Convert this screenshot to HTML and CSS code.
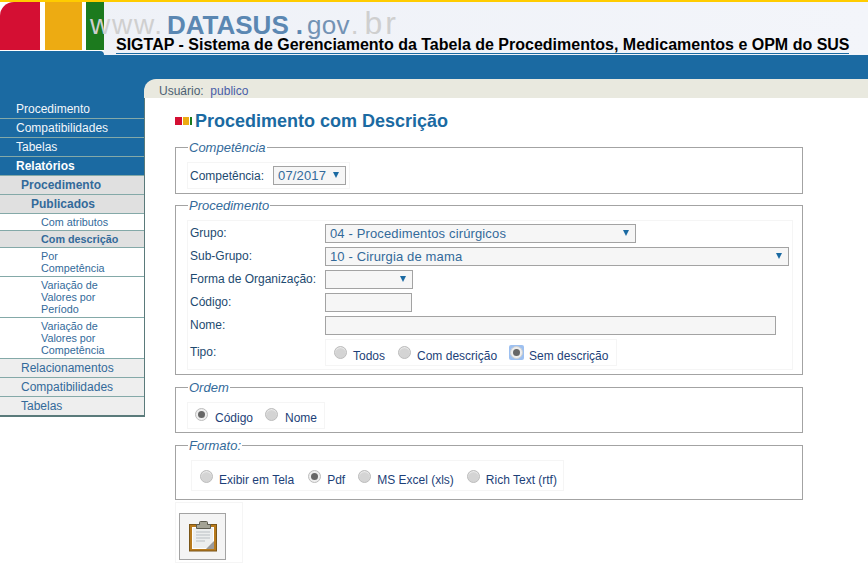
FILE: index.html
```html
<!DOCTYPE html>
<html lang="pt-BR">
<head>
<meta charset="utf-8">
<title>SIGTAP</title>
<link rel="stylesheet" href="styles.css">
</head>
<body>
<header class="top">
  <div class="logo">
    <div class="squares"><span class="sq red"></span><span class="sq amber"></span><span class="sq green"></span></div>
    <div class="foot"></div>
  </div>
  <div class="brand">
    <div class="site"><span class="www">www.</span><span class="blue">DATASUS</span><span class="dot">.</span><span class="gov">gov</span><span class="dot2">.</span><span class="br">br</span></div>
    <div class="system">SIGTAP - Sistema de Gerenciamento da Tabela de Procedimentos, Medicamentos e OPM do SUS</div>
  </div>
</header>
<div class="band"></div>
<div class="userrow">
  <div class="userbar">Usuário:&nbsp; <a class="userlink">publico</a></div>
</div>
<div class="page">
  <nav class="menu">
    <a class="m1">Procedimento</a>
    <a class="m1">Compatibilidades</a>
    <a class="m1">Tabelas</a>
    <a class="m1 cur">Relatórios</a>
    <a class="m2 cur">Procedimento</a>
    <a class="m3 cur">Publicados</a>
    <a class="m4">Com atributos</a>
    <a class="m4 cur">Com descrição</a>
    <a class="m4">Por<br>Competência</a>
    <a class="m4">Variação de<br>Valores por<br>Período</a>
    <a class="m4">Variação de<br>Valores por<br>Competência</a>
    <a class="m2">Relacionamentos</a>
    <a class="m2">Compatibilidades</a>
    <a class="m2 last">Tabelas</a>
  </nav>
  <main class="content">
    <h1 class="title"><span class="bullets"><i class="b1"></i><i class="b2"></i><i class="b3"></i></span>Procedimento com Descrição</h1>

    <fieldset class="fs fs1">
      <legend>Competência</legend>
      <div class="box box1">
        <span class="lbl">Competência:</span>
        <div class="sel sel-comp">07/2017<i class="arrow"></i></div>
      </div>
    </fieldset>

    <fieldset class="fs fs2">
      <legend>Procedimento</legend>
      <div class="box box2">
        <div class="row"><span class="rl">Grupo:</span><div class="sel w311">04 - Procedimentos cirúrgicos<i class="arrow"></i></div></div>
        <div class="row"><span class="rl">Sub-Grupo:</span><div class="sel w464">10 - Cirurgia de mama<i class="arrow"></i></div></div>
        <div class="row"><span class="rl">Forma de Organização:</span><div class="sel w88"><i class="arrow"></i></div></div>
        <div class="row"><span class="rl">Código:</span><div class="inp w87"></div></div>
        <div class="row"><span class="rl">Nome:</span><div class="inp w451"></div></div>
        <div class="row rowt"><span class="rl">Tipo:</span>
          <div class="box radios rt">
            <span class="r"></span><span class="rt1">Todos</span>
            <span class="r"></span><span class="rt1">Com descrição</span>
            <span class="ring"><span class="r on"></span></span><span class="rt1">Sem descrição</span>
          </div>
        </div>
      </div>
    </fieldset>

    <fieldset class="fs fs3">
      <legend>Ordem</legend>
      <div class="box radios ro">
        <span class="r on"></span><span class="rt1">Código</span>
        <span class="r"></span><span class="rt1">Nome</span>
      </div>
    </fieldset>

    <fieldset class="fs fs4">
      <legend>Formato:</legend>
      <div class="box radios rf">
        <span class="r"></span><span class="rt1 wide">Exibir em Tela</span>
        <span class="r on"></span><span class="rt1">Pdf</span>
        <span class="r"></span><span class="rt1">MS Excel (xls)</span>
        <span class="r"></span><span class="rt1">Rich Text (rtf)</span>
      </div>
    </fieldset>

    <div class="box btnbox">
      <div class="btn">
        <svg width="28" height="31" viewBox="0 0 28 31">
          <rect x="0.5" y="3.5" width="27" height="26.5" fill="#b87a1c" stroke="#7a5518"/>
          <rect x="3.5" y="6.5" width="21" height="21" fill="#eceeee" stroke="#fff"/>
          <path d="M17 28 L25 20 V28 Z" fill="#9a9a9a"/>
          <path d="M7 11h14M7 14h14M7 17h14M7 20h9" stroke="#b9bec2" stroke-width="1"/>
          <path d="M7.5 3.5 H10.5 V1.5 Q10.5 0.5 11.5 0.5 H17.5 Q18.5 0.5 18.5 1.5 V3.5 H21.5 V7.5 H7.5 Z" fill="#a3a395" stroke="#5c5c50"/>
        </svg>
      </div>
    </div>
  </main>
</div>
</body>
</html>
```
FILE: styles.css
```css
* { box-sizing: border-box; }
html, body { margin: 0; padding: 0; background: #fff; overflow: hidden; }
body { width: 868px; height: 568px; font-family: "Liberation Sans", Arial, sans-serif; font-size: 12px; color: #1b6aa2; }

.top { display: flex; height: 55px; border-top: 2px solid #ffcc00; background: linear-gradient(90deg, #eef1f7, #f3f5fa); }
.logo { width: 104px; height: 53px; flex: none; display: flex; flex-direction: column; }
.squares { height: 49px; display: flex; background: #fff; }
.foot { height: 4px; background: #1b6aa2; border-top-right-radius: 5px; }
.sq { display: block; height: 48px; }
.red { width: 40px; background: #d40f33; border-top-left-radius: 14px; }
.amber { width: 37px; margin-left: 5px; background: #edab12; }
.green { width: 18px; margin-left: 4px; background: #1c7a1e; }
.brand { flex: 1; position: relative; }
.site { position: absolute; left: -14px; top: 5px; font-size: 28px; line-height: 32px; white-space: nowrap; }
.www { color: #cfcfcf; letter-spacing: 1.75px; margin-right: 3px; }
.blue { color: #5b87b2; font-size: 26px; font-weight: bold; }
.dot { color: #5b87b2; font-weight: bold; font-size: 26px; margin-left: 7px; }
.gov { color: #7392b4; font-size: 26px; letter-spacing: 0.3px; margin-left: 4px; }
.dot2 { color: #cfcfcf; margin-left: 1px; }
.br { color: #cfcfcf; font-size: 32px; letter-spacing: 3px; margin-left: 6px; }
.system { position: absolute; left: 12px; top: 35px; width: 733px; font-size: 16px; line-height: 16px; font-weight: bold; color: #000; white-space: nowrap; border-bottom: 1px solid #1b6aa2; }

.band { height: 24px; background: #1b6aa2; }
.userrow { height: 19px; background: #1b6aa2; padding-left: 144px; }
.userbar { height: 19px; background: #e9e9df; border-top-left-radius: 12px; padding-left: 15px; line-height: 24px; color: #4c5f73; font-size: 12px; }
.userlink { color: #4a5ea8; }

.page { display: flex; align-items: flex-start; }
.menu { width: 145px; flex: none; border-right: 1px solid #5a7a7a; border-bottom: 2px solid #5a7a7a; padding-top: 2px; background: #1b6aa2; }
.menu a { display: block; border-bottom: 1px solid #84a9a8; }
.m1 { height: 19px; padding-left: 16px; background: #1b6aa2; color: #f2f6fa; line-height: 18px; }
.m1.cur { font-weight: bold; color: #fff; }
.m2 { height: 19px; padding-left: 21px; background: #eeeeee; color: #336a9a; line-height: 18px; }
.m2.cur { background: #e0e0e0; font-weight: bold; }
.m3 { height: 19px; padding-left: 31px; background: #e0e0e0; font-weight: bold; color: #336a9a; line-height: 18px; }
.m4 { padding: 2px 0 2px 41px; font-size: 10.8px; line-height: 12px; color: #336a9a; background: #fff; }
.m4.cur { background: #e0e0e0; font-weight: bold; }
.menu a.last { border-bottom: 0; height: 18px; }

.content { width: 723px; padding: 13px 0 0 30px; }
.title { margin: 0 0 9px; height: 20px; font-size: 18px; line-height: 20px; font-weight: bold; color: #1b6aa2; display: flex; align-items: center; }
.bullets { display: flex; gap: 1px; margin-right: 3px; }
.bullets i { display: block; height: 8px; }
.b1 { width: 7px; background: #d40f33; }
.b2 { width: 6px; background: #edab12; }
.b3 { width: 2px; background: #1c7a1e; }

.fs { margin: 0 0 5px; width: 628px; padding: 7px 11px 0; border: 1px solid #a3a3a3; min-width: 0; }
.fs legend { padding: 0 1px; margin-left: 1px; font-style: italic; font-size: 13px; line-height: 15px; color: #336a9a; }
.fs1 { height: 54px; margin-bottom: 4px; }
.fs2 { height: 177px; }
.fs3 { height: 53px; }
.fs4 { height: 62px; margin-bottom: 2px; }

.box { border: 1px solid #f5f5f5; }
.lbl { color: #1d4a70; }
.box1 { width: 163px; height: 27px; display: flex; align-items: center; padding-left: 2px; gap: 9px; color: #1d4a70; }
.box2 { width: 606px; height: 150px; padding: 3px 0 0 2px; }
.row { display: flex; height: 19px; margin-bottom: 4px; align-items: center; }
.rl { width: 135px; flex: none; color: #1d4a70; position: relative; top: -1px; }
.rowt { height: 27px; margin: 0; }

.sel, .inp { height: 19px; border: 1px solid #a3a3a3; background: #f6f6f6; font-size: 13px; letter-spacing: 0.14px; line-height: 17px; padding-left: 4px; color: #336a9a; position: relative; flex: none; }
.arrow { position: absolute; right: 6px; top: 5px; width: 0; height: 0; border-left: 3px solid transparent; border-right: 3px solid transparent; border-top: 6px solid #1b6aa2; }
.sel-comp { width: 73px; }
.w311 { width: 311px; }
.w464 { width: 464px; }
.w88 { width: 88px; }
.w87 { width: 87px; }
.w451 { width: 451px; }

.radios { display: flex; align-items: center; color: #1d3f78; white-space: nowrap; }
.r { width: 13px; height: 13px; border-radius: 50%; background: #d4d4d4; border: 1px solid #bdbdbd; box-shadow: inset 0 1px 1px #eee; flex: none; position: relative; }
.r.on { background: #eee; }
.r.on::after { content: ""; position: absolute; left: 2px; top: 2px; width: 7px; height: 7px; border-radius: 50%; background: #666; }
.ring { display: block; flex: none; padding: 1px; margin: -1px; background: #9dc0f0; border-radius: 2px; }
.ring .r { display: block; border-color: #d0d0d0; }
.rt1 { flex: none; margin-left: 6px; margin-right: 13px; position: relative; top: 2px; }
.rt { width: 292px; height: 27px; padding-left: 8px; }
.rt .rt1 { top: 3px; }
.ro { width: 138px; height: 27px; padding-left: 7px; }
.ro .r { top: -1px; }
.ro .rt1 { margin-left: 7px; margin-right: 12px; }
.rf { width: 373px; height: 31px; margin-left: 4px; padding-left: 8px; }
.rf .r { top: 1px; }
.rf .rt1 { top: 4px; }
.rf .rt1.wide { margin-right: 14px; }

.btnbox { width: 68px; height: 61px; padding: 10px 0 0 3px; }
.btn { width: 47px; height: 47px; border: 1px solid #a3a3a3; background: #f4f4f4; display: flex; align-items: center; justify-content: center; }
```
